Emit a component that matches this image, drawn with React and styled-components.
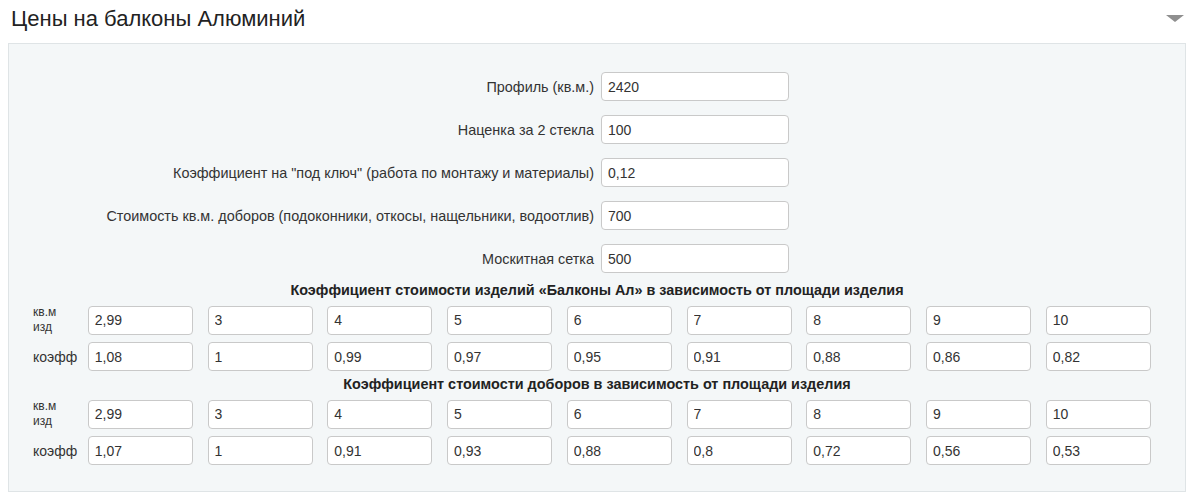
import styled, { createGlobalStyle } from "styled-components";

const GlobalStyle = createGlobalStyle`
  body {
    margin: 0;
    background: #fff;
    font-family: "Liberation Sans", Arial, sans-serif;
    color: #333;
  }
`;

const fields = [
  ["Профиль (кв.м.)", "2420"],
  ["Наценка за 2 стекла", "100"],
  ['Коэффициент на "под ключ" (работа по монтажу и материалы)', "0,12"],
  ["Стоимость кв.м. доборов (подоконники, откосы, нащельники, водоотлив)", "700"],
  ["Москитная сетка", "500"],
];

const tables = [
  {
    title: "Коэффициент стоимости изделий «Балконы Ал» в зависимость от площади изделия",
    area: ["2,99", "3", "4", "5", "6", "7", "8", "9", "10"],
    coef: ["1,08", "1", "0,99", "0,97", "0,95", "0,91", "0,88", "0,86", "0,82"],
  },
  {
    title: "Коэффициент стоимости доборов в зависимость от площади изделия",
    area: ["2,99", "3", "4", "5", "6", "7", "8", "9", "10"],
    coef: ["1,07", "1", "0,91", "0,93", "0,88", "0,8", "0,72", "0,56", "0,53"],
  },
];

export default function App() {
  return (
    <>
      <GlobalStyle />
      <Wrap>
        <Header>
          <Title>Цены на балконы Алюминий</Title>
          <Arrow />
        </Header>
        <Panel>
          <Form>
            {fields.map(([label, value]) => (
              <Row key={label}>
                <Label>{label}</Label>
                <Field>
                  <Input defaultValue={value} />
                </Field>
              </Row>
            ))}
          </Form>
          {tables.map((t, i) => (
            <Section key={i} $first={i === 0}>
              <Heading>{t.title}</Heading>
              <Grid>
                <RowLabel $small>кв.м<br />изд</RowLabel>
                {t.area.map((v, j) => (
                  <Input key={"a" + j} defaultValue={v} />
                ))}
                <RowLabel>коэфф</RowLabel>
                {t.coef.map((v, j) => (
                  <Input key={"c" + j} defaultValue={v} />
                ))}
              </Grid>
            </Section>
          ))}
        </Panel>
      </Wrap>
    </>
  );
}

const Wrap = styled.div`
  width: 1200px;
  padding: 0 14px 0 8px;
  box-sizing: border-box;
`;

const Header = styled.div`
  display: flex;
  align-items: center;
  justify-content: space-between;
  height: 43px;
  padding: 0 2px 6px 3px;
  box-sizing: border-box;
`;

const Title = styled.h2`
  margin: 0;
  font-weight: normal;
  font-size: 22px;
  color: #222;
`;

const Arrow = styled.span`
  width: 0;
  height: 0;
  border-left: 9px solid transparent;
  border-right: 9px solid transparent;
  border-top: 7px solid #8f8f8f;
`;

const Panel = styled.div`
  background: #f4f7f8;
  border: 1px solid #dfe4e6;
  padding: 28px 0 26px;
`;

const Form = styled.div`
  display: flex;
  flex-direction: column;
  gap: 14px;
`;

const Row = styled.div`
  display: grid;
  grid-template-columns: 1fr 1fr;
  align-items: center;
`;

const Label = styled.label`
  text-align: right;
  padding-right: 3px;
  font-size: 14.4px;
  color: #333;
`;

const Field = styled.div`
  margin-left: 4px;
  width: 188px;
`;

const Input = styled.input`
  box-sizing: border-box;
  width: 100%;
  height: 29px;
  border: 1px solid #c9c9c9;
  border-radius: 4px;
  background: #fff;
  padding: 0 6px;
  font-family: "Liberation Sans", Arial, sans-serif;
  font-size: 14px;
  color: #333;
  outline: none;
`;

const Section = styled.div`
  margin-top: ${(p) => (p.$first ? "9px" : "5px")};
`;

const Heading = styled.div`
  text-align: center;
  font-weight: bold;
  font-size: 14.4px;
  line-height: 16px;
  color: #222;
  margin-bottom: 7px;
`;

const Grid = styled.div`
  display: grid;
  grid-template-columns: 40px repeat(9, 105px);
  column-gap: 14.75px;
  row-gap: 7px;
  padding-left: 24px;
  align-items: center;
`;

const RowLabel = styled.div`
  white-space: nowrap;
  font-size: ${(p) => (p.$small ? "12px" : "14px")};
  line-height: ${(p) => (p.$small ? "15px" : "16px")};
  color: #333;
`;
